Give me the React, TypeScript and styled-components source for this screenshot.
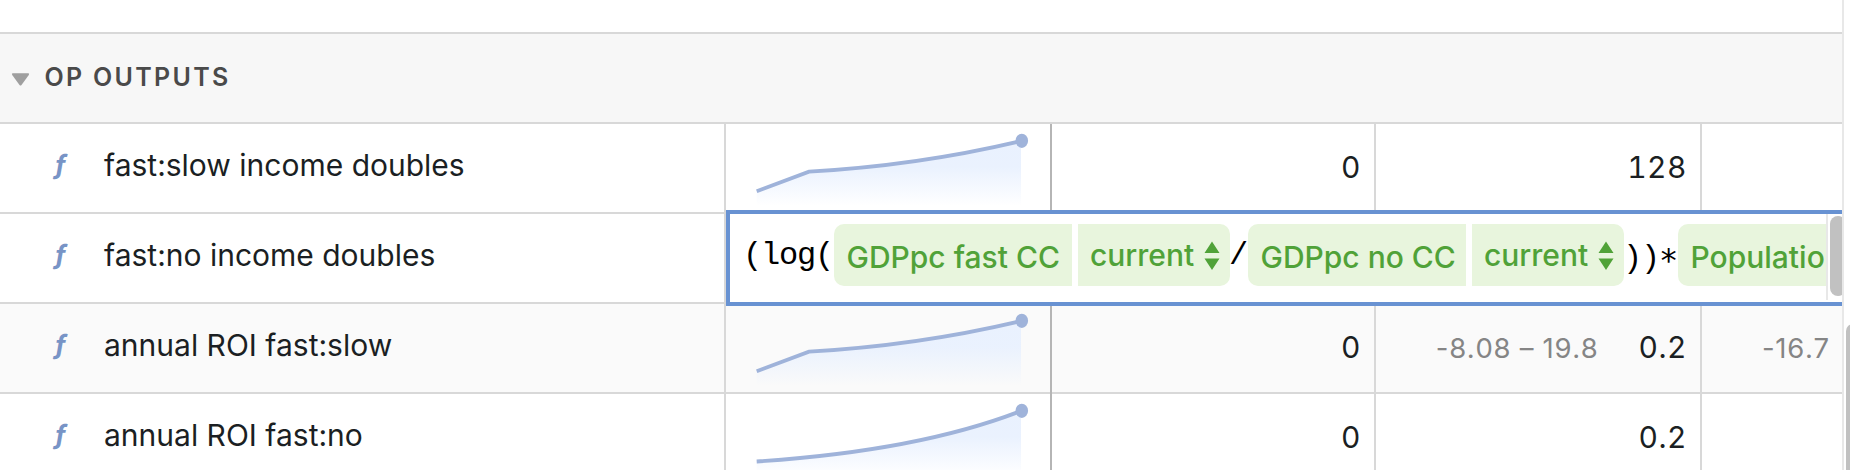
import React from "react";
import styled, { createGlobalStyle } from "styled-components";

const GlobalStyle = createGlobalStyle`
  * { box-sizing: border-box; }
  body { margin: 0; background: #fff; overflow: hidden; }
`;

const Page = styled.div`
  display: flex;
  width: 1850px;
  height: 470px;
  overflow: hidden;
  font-family: Inter, "Liberation Sans", sans-serif;
  color: #1b1f23;
`;

const Sheet = styled.main`
  width: 1842px;
  height: 470px;
  overflow: hidden;
`;

const ScrollTrack = styled.aside`
  width: 8px;
  padding: 324px 0 0 2px;
  border-left: 2px solid #e8e8e8;
  overflow: hidden;
`;

const ScrollThumb = styled.div`
  width: 14px;
  height: 300px;
  border-radius: 7px;
  background: #c1c1c1;
`;

const Spacer = styled.div`
  height: 34px;
  border-bottom: 2px solid #d8d8d8;
`;

const SectionHeader = styled.header`
  display: flex;
  align-items: center;
  height: 90px;
  padding: 0 0 2px 11px;
  gap: 14.5px;
  background: #f7f7f7;
  border-bottom: 2px solid #d8d8d8;
`;

const Caret = styled.svg`
  width: 19px;
  height: 13px;
  margin-top: 5px;
  fill: #9f9f9f;
`;

const SectionTitle = styled.h2`
  margin: 0;
  font-size: 25px;
  font-weight: 600;
  letter-spacing: 2.3px;
  color: #4a4a4a;
`;

const Row = styled.section<{ $shaded?: boolean }>`
  position: relative;
  display: grid;
  grid-template-columns: 726px 326px 324px 326px 140px;
  height: 90px;
  background: ${(p) => (p.$shaded ? "#fafafa" : "#fff")};
`;

const Cell = styled.div<{ $divider?: string }>`
  display: flex;
  align-items: center;
  height: 90px;
  overflow: hidden;
  box-shadow: inset 0 -2px #d8d8d8;
  border-right: 2px solid ${(p) => p.$divider ?? "#d8d8d8"};
`;

const NameCell = styled(Cell)`
  padding: 0 0 8px 54px;
`;

const FunctionMark = styled.span`
  width: 50px;
  font-size: 27px;
  font-style: italic;
  font-weight: 700;
  line-height: 36px;
  color: #7894c6;
`;

const Name = styled.span`
  font-size: 30px;
  line-height: 36px;
  white-space: nowrap;
`;

const ValueCell = styled(Cell)`
  justify-content: flex-end;
  padding: 0 13px 4px 0;
  gap: 40px;
`;

const ClippedCell = styled(Cell)`
  border-right: 0;
  padding: 0 0 4px 60px;
`;

const Value = styled.span`
  font-size: 30px;
  line-height: 36px;
  letter-spacing: 0.5px;
  font-variant-numeric: tabular-nums;
`;

const Range = styled.span`
  margin-top: 1px;
  font-size: 27.5px;
  line-height: 36px;
  letter-spacing: 0.7px;
  font-kerning: none;
  white-space: nowrap;
  color: #858585;
`;

const Chart = styled.svg`
  display: block;
  width: 324px;
  height: 88px;
  margin-bottom: 2px;
`;

const Editor = styled.div`
  position: absolute;
  z-index: 1;
  top: -4px;
  left: 726px;
  display: flex;
  width: 1116px;
  height: 96px;
  border: 4px solid #6892d2;
  border-right: 0;
  background: #fff;
`;

const Formula = styled.div`
  display: flex;
  align-items: flex-start;
  width: 1096px;
  padding: 10px 0 0 14px;
  overflow: hidden;
`;

const EditorTrack = styled.div`
  width: 16px;
  height: 86px;
  padding: 2px 0 0 2px;
  border-left: 2px solid #e8e8e8;
  overflow: hidden;
`;

const EditorThumb = styled.div`
  width: 16px;
  height: 80px;
  border-radius: 8px;
  background: #c1c1c1;
`;

const Code = styled.span<{ $chars: number }>`
  flex: none;
  width: ${(p) => p.$chars * 18}px;
  height: 62px;
  font-family: "Liberation Mono", monospace;
  font-size: 32px;
  letter-spacing: -1.2px;
  text-indent: -1px;
  line-height: 64px;
  color: #000;
  white-space: pre;
`;

const Star = styled.span`
  position: relative;
  top: 4px;
  font-family: "DejaVu Sans Mono", monospace;
`;

const Token = styled.span<{ $width: number }>`
  display: flex;
  flex: none;
  width: ${(p) => p.$width}px;
  height: 62px;
  gap: 6px;
  border-radius: 10px;
  overflow: hidden;
  font-size: 30px;
  font-weight: 500;
  line-height: 66px;
  color: #50a238;
  white-space: nowrap;
`;

const TokenName = styled.span`
  flex: 1;
  padding-left: 12.5px;
  background: #e8f5dd;
`;

const TokenPeriod = styled.span`
  display: flex;
  align-items: center;
  justify-content: space-between;
  width: 152px;
  padding: 0 10px 0 12px;
  background: #e8f5dd;
`;

const PeriodLabel = styled.span`
  height: 62px;
  line-height: 62px;
`;

const Stepper = styled.svg`
  width: 16px;
  height: 29px;
  fill: #50a238;
`;

const BENT = "M30.7 67.3 L83 47.6 Q192 41.5 295 17";
const SMOOTH = "M30.7 67.5 Q192 57 295 17";

function Sparkline({ id, line }: { id: string; line: string }) {
  return (
    <Chart viewBox="0 0 324 88">
      <defs>
        <linearGradient id={id} x1="0" y1="17" x2="0" y2="82" gradientUnits="userSpaceOnUse">
          <stop offset="0" stopColor="#e9f1fe" />
          <stop offset="0.4" stopColor="#e9f1fe" stopOpacity="0.95" />
          <stop offset="1" stopColor="#e9f1fe" stopOpacity="0" />
        </linearGradient>
      </defs>
      <path d={`${line} V82 H30.7 Z`} fill={`url(#${id})`} />
      <path d={line} fill="none" stroke="#9fb3da" strokeWidth="3.8" />
      <ellipse cx="295.8" cy="16.8" rx="6.3" ry="7.1" fill="#9fb3da" />
    </Chart>
  );
}

function Variable({ name, width, period = true }: { name: string; width: number; period?: boolean }) {
  return (
    <Token $width={width}>
      <TokenName>{name}</TokenName>
      {period && (
        <TokenPeriod>
          <PeriodLabel>current</PeriodLabel>
          <Stepper viewBox="0 0 16 29">
            <path d="M8 0.5 L15.5 12 H0.5 Z M0.5 17.5 H15.5 L8 29 Z" />
          </Stepper>
        </TokenPeriod>
      )}
    </Token>
  );
}

function FormulaEditor() {
  return (
    <Editor>
      <Formula>
        <Code $chars={5}>(log(</Code>
        <Variable name="GDPpc fast CC" width={396} />
        <Code $chars={1}>/</Code>
        <Variable name="GDPpc no CC" width={376} />
        <Code $chars={3}>
          ))<Star>*</Star>
        </Code>
        <Variable name="Populatio" width={240} period={false} />
      </Formula>
      <EditorTrack>
        <EditorThumb />
      </EditorTrack>
    </Editor>
  );
}

type Output = {
  name: string;
  line?: string;
  values?: [string, string];
  range?: string;
  clipped?: string;
  shaded?: boolean;
};

const outputs: Output[] = [
  { name: "fast:slow income doubles", line: BENT, values: ["0", "128"] },
  { name: "fast:no income doubles" },
  {
    name: "annual ROI fast:slow",
    line: BENT,
    values: ["0", "0.2"],
    range: "-8.08 – 19.8",
    clipped: "-16.7",
    shaded: true,
  },
  { name: "annual ROI fast:no", line: SMOOTH, values: ["0", "0.2"] },
];

export default function App() {
  return (
    <Page>
      <GlobalStyle />
      <Sheet>
        <Spacer />
        <SectionHeader>
          <Caret viewBox="0 0 18 13">
            <path d="M1.2 0.3 H16.8 Q18.2 0.6 17.3 2 L10 11.9 Q9 13 8 11.9 L0.7 2 Q-0.2 0.6 1.2 0.3 Z" />
          </Caret>
          <SectionTitle>OP OUTPUTS</SectionTitle>
        </SectionHeader>
        {outputs.map((o, i) => (
          <Row key={o.name} $shaded={o.shaded}>
            <NameCell>
              <FunctionMark>ƒ</FunctionMark>
              <Name>{o.name}</Name>
            </NameCell>
            {o.values ? (
              <>
                <Cell $divider="#b5b5b5">{o.line && <Sparkline id={`fill${i}`} line={o.line} />}</Cell>
                <ValueCell>
                  <Value>{o.values[0]}</Value>
                </ValueCell>
                <ValueCell>
                  {o.range && <Range>{o.range}</Range>}
                  <Value>{o.values[1]}</Value>
                </ValueCell>
                <ClippedCell>{o.clipped && <Range>{o.clipped}</Range>}</ClippedCell>
              </>
            ) : (
              <FormulaEditor />
            )}
          </Row>
        ))}
      </Sheet>
      <ScrollTrack>
        <ScrollThumb />
      </ScrollTrack>
    </Page>
  );
}
